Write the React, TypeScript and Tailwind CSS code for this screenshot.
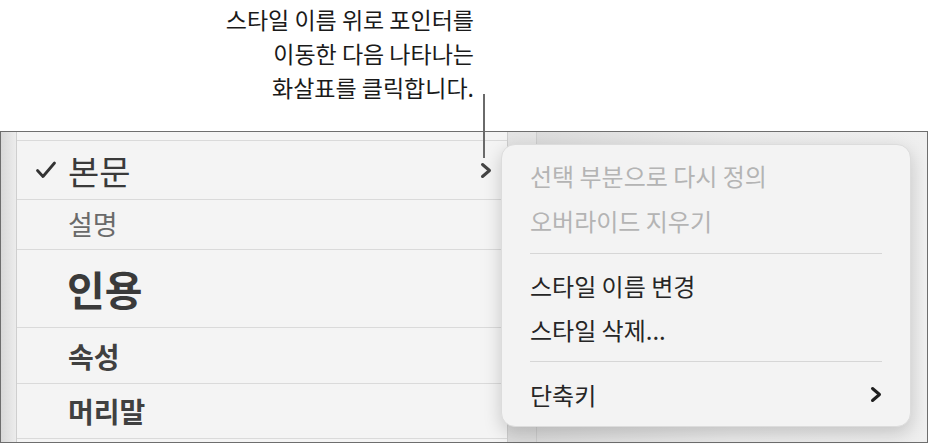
import React from "react";

const font = { fontFamily: '"Noto Sans CJK KR", "Noto Sans", sans-serif' };

function Chevron({ className }: { className?: string }) {
  return (
    <svg viewBox="0 0 12 16" className={className} fill="none">
      <path d="M2.5 2 L9.5 8 L2.5 14" stroke="currentColor" strokeWidth="3" strokeLinecap="round" strokeLinejoin="round" />
    </svg>
  );
}

function Check() {
  return (
    <svg viewBox="0 0 22 20" className="h-[20px] w-[22px] text-[#333]" fill="none">
      <path d="M2.5 10.5 L8 16.5 L19.5 3" stroke="currentColor" strokeWidth="2.8" strokeLinecap="round" strokeLinejoin="round" />
    </svg>
  );
}

export default function App() {
  return (
    <div className="relative h-[444px] w-[928px] overflow-hidden bg-white" style={font}>
      {/* callout */}
      <div className="flex h-[131px] justify-end pr-[454px] pt-[2px]">
        <p className="text-right text-[23px] leading-[34px] text-[#1a1a1a]">
          스타일 이름 위로 포인터를
          <br />
          이동한 다음 나타나는
          <br />
          화살표를 클릭합니다.
        </p>
      </div>

      {/* window frame */}
      <div className="flex h-[312px] border border-[#6e6e6e]">
        <div className="w-[16px] border-r border-[#cfcfcf] bg-gradient-to-r from-[#d9d9d9] to-[#ececec]" />

        <div className="w-[490px] bg-[#f4f4f4]">
          <div className="h-[9px] border-b border-[#dadada]" />
          <div className="flex h-[59px] items-center border-b border-[#dadada] pl-[18px] pr-[15px]">
            <Check />
            <span className="ml-[11px] text-[34px] text-[#3a3a3a]">본문</span>
            <Chevron className="ml-auto h-[17px] w-[12px] text-[#444]" />
          </div>
          <div className="flex h-[50px] items-center border-b border-[#dadada] pl-[51px]">
            <span className="text-[27px] text-[#6a6a6a]">설명</span>
          </div>
          <div className="flex h-[78px] items-center border-b border-[#dadada] pl-[50px]">
            <span className="text-[41px] font-bold text-[#3a3a3a]">인용</span>
          </div>
          <div className="flex h-[56px] items-center border-b border-[#dadada] pl-[51px]">
            <span className="text-[28px] font-bold text-[#404040]">속성</span>
          </div>
          <div className="flex h-[55px] items-center border-b border-[#dadada] pl-[51px]">
            <span className="text-[28px] font-bold text-[#404040]">머리말</span>
          </div>
        </div>

        <div className="w-[30px] border-l border-r border-[#cdcdcd] bg-gradient-to-b from-[#e4e4e4] to-[#dcdcdc]" />
        <div className="flex-1 bg-gradient-to-r from-[#dcdcdc] via-[#ebebeb] to-[#efefef]" />
      </div>

      {/* leader line */}
      <div className="absolute left-[483px] top-[94px] h-[64px] w-[2px] bg-[#6a6a6a]" />

      {/* context menu */}
      <div className="absolute left-[501px] top-[144px] flex h-[283px] w-[410px] flex-col rounded-[14px] border border-[#dcdcdc] bg-[#f3f3f3] pb-[9px] pt-[9px] shadow-[0_6px_18px_rgba(0,0,0,0.18)]">
        <div className="flex h-[45px] items-center px-[28px] text-[24px] text-[#b4b4b4]">선택 부분으로 다시 정의</div>
        <div className="flex h-[45px] items-center px-[28px] text-[24px] text-[#b4b4b4]">오버라이드 지우기</div>
        <div className="mx-[28px] mb-[11px] mt-[9px] h-px bg-[#d6d6d6]" />
        <div className="flex h-[44px] items-center px-[28px] text-[24px] text-[#262626]">스타일 이름 변경</div>
        <div className="flex h-[44px] items-center px-[28px] text-[24px] text-[#262626]">스타일 삭제...</div>
        <div className="mx-[28px] mb-[10px] mt-[9px] h-px bg-[#d6d6d6]" />
        <div className="flex h-[45px] items-center px-[28px] text-[24px] text-[#262626]">
          단축키
          <Chevron className="ml-auto h-[17px] w-[12px] text-[#1f1f1f]" />
        </div>
      </div>
    </div>
  );
}
